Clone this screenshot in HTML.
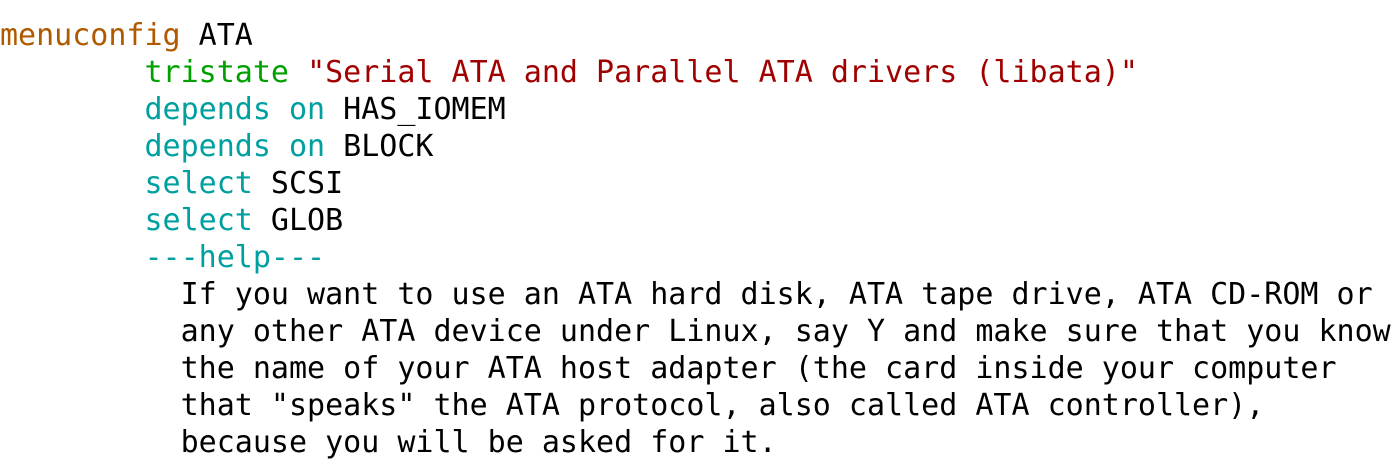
<!DOCTYPE html>
<html><head><meta charset="utf-8"><style>
html,body{margin:0;padding:0;background:#fff;width:1395px;height:475px;overflow:hidden}
pre{margin:0;padding:17px 0 0 0;font-family:"DejaVu Sans Mono","Liberation Mono",monospace;font-size:30px;line-height:37px;color:#000}
.b{color:#b05a00}.g{color:#00a000}.r{color:#a00000}.c{color:#00a0a0}
</style></head><body><pre><span class="b">menuconfig</span> ATA
        <span class="g">tristate</span> <span class="r">"Serial ATA and Parallel ATA drivers (libata)"</span>
        <span class="c">depends on</span> HAS_IOMEM
        <span class="c">depends on</span> BLOCK
        <span class="c">select</span> SCSI
        <span class="c">select</span> GLOB
        <span class="c">---help---</span>
          If you want to use an ATA hard disk, ATA tape drive, ATA CD-ROM or
          any other ATA device under Linux, say Y and make sure that you know
          the name of your ATA host adapter (the card inside your computer
          that "speaks" the ATA protocol, also called ATA controller),
          because you will be asked for it.
</pre></body></html>
